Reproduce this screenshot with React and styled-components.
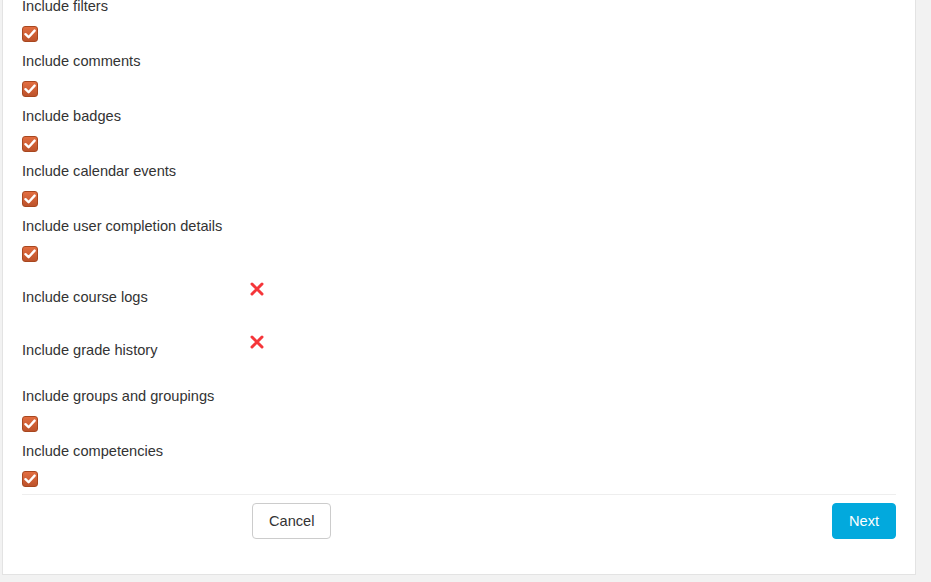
import React from "react";
import styled, { createGlobalStyle } from "styled-components";

const GlobalStyle = createGlobalStyle`
  html, body {
    margin: 0;
    padding: 0;
    background: #f2f2f2;
    overflow: hidden;
  }
  body {
    font-family: "Liberation Sans", Arial, sans-serif;
    color: #333;
  }
`;

const Page = styled.div`
  width: 931px;
  height: 582px;
  box-sizing: border-box;
  padding: 0 15px 0 2px;
  overflow: hidden;
`;

const Card = styled.div`
  margin-top: -25px;
  background: #fff;
  border: 1px solid #e3e3e3;
  padding: 20px 19px 35px 19px;
`;

const List = styled.div`
  display: flex;
  flex-direction: column;
`;

const CheckRow = styled.div`
  display: flex;
  flex-direction: column;
  align-items: flex-start;
  margin-bottom: 9px;

  &:last-child {
    margin-bottom: 7px;
  }
`;

const Label = styled.label`
  font-size: 14.6px;
  line-height: 20px;
  color: #333;
`;

const Box = styled.span`
  margin-top: 10px;
  width: 16px;
  height: 16px;
  box-sizing: border-box;
  border-radius: 3px;
  border: 1px solid #a8471f;
  background: linear-gradient(#e26d40, #bd532b);
  display: flex;
  align-items: center;
  justify-content: center;
`;

const StaticRow = styled.div`
  display: grid;
  grid-template-columns: 228px 1fr;
  align-items: start;
  padding-bottom: ${(p) => p.$bottom}px;

  ${Label} {
    padding-top: 16px;
  }
`;

const Cross = styled.span`
  margin-top: 11px;
  width: 14px;
  height: 14px;
  display: block;
`;

const Footer = styled.div`
  border-top: 1px solid #eee;
  padding-top: 8px;
  display: flex;
  align-items: center;
`;

const Button = styled.button`
  height: 36px;
  box-sizing: border-box;
  padding: 0 16px;
  font-family: "Liberation Sans", Arial, sans-serif;
  font-size: 14.6px;
  border-radius: 4px;
  border: 1px solid ${(p) => (p.$primary ? "#02a9dd" : "#ccc")};
  background: ${(p) => (p.$primary ? "#02a9dd" : "#fff")};
  color: ${(p) => (p.$primary ? "#fff" : "#333")};
  cursor: pointer;
`;

const CancelButton = styled(Button)`
  margin-left: 230px;
`;

const NextButton = styled(Button)`
  margin-left: auto;
`;

function Check() {
  return (
    <svg width="12" height="10" viewBox="0 0 12 10">
      <path
        d="M1.5 5.2 L4.6 8.2 L10.6 1.6"
        fill="none"
        stroke="#fff"
        strokeWidth="2.4"
        strokeLinecap="round"
        strokeLinejoin="round"
      />
    </svg>
  );
}

function RedX() {
  return (
    <Cross>
      <svg width="14" height="14" viewBox="0 0 14 14">
        <path
          d="M2 2 L12 12 M12 2 L2 12"
          fill="none"
          stroke="#f5363a"
          strokeWidth="3"
          strokeLinecap="round"
        />
      </svg>
    </Cross>
  );
}

const top = [
  "Include filters",
  "Include comments",
  "Include badges",
  "Include calendar events",
  "Include user completion details",
];

const bottom = ["Include groups and groupings", "Include competencies"];

export default function App() {
  return (
    <>
      <GlobalStyle />
      <Page>
        <Card>
          <List>
            {top.map((t) => (
              <CheckRow key={t}>
                <Label>{t}</Label>
                <Box>
                  <Check />
                </Box>
              </CheckRow>
            ))}
            <StaticRow $bottom={17}>
              <Label>Include course logs</Label>
              <RedX />
            </StaticRow>
            <StaticRow $bottom={26}>
              <Label>Include grade history</Label>
              <RedX />
            </StaticRow>
            {bottom.map((t) => (
              <CheckRow key={t}>
                <Label>{t}</Label>
                <Box>
                  <Check />
                </Box>
              </CheckRow>
            ))}
          </List>
          <Footer>
            <CancelButton>Cancel</CancelButton>
            <NextButton $primary>Next</NextButton>
          </Footer>
        </Card>
      </Page>
    </>
  );
}
